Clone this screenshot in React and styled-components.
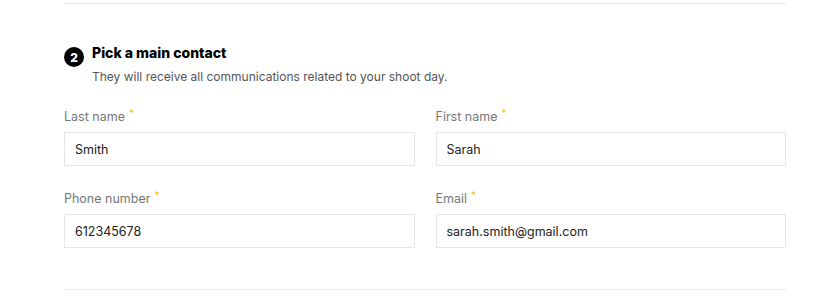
import React from 'react'
import styled, { createGlobalStyle } from 'styled-components'

const GlobalStyle = createGlobalStyle`
    body {
        margin: 0;
        background: #ffffff;
        font-family: Inter, "Open Sans", sans-serif;
    }
`

const Page = styled.div`
    width: 722px;
    margin-left: 64px;
    padding-top: 3px;
`

const Divider = styled.div`
    height: 1px;
    background: #e9e9e9;
    margin-top: ${props => props.top || 0}px;
`

const Header = styled.div`
    display: flex;
    align-items: flex-start;
    gap: 8px;
    margin-top: 39px;
`

const Badge = styled.div`
    width: 20px;
    height: 20px;
    margin-top: 4px;
    border-radius: 50%;
    background: #000000;
    color: #ffffff;
    font-size: 12px;
    font-weight: 800;
    display: flex;
    align-items: center;
    justify-content: center;
`

const Title = styled.h2`
    margin: 0;
    font-size: 14px;
    line-height: 20px;
    font-weight: 800;
    color: #000000;
`

const Subtitle = styled.p`
    margin: 5px 0 0;
    font-size: 12px;
    line-height: 18px;
    color: #555555;
`

const Fields = styled.div`
    display: grid;
    grid-template-columns: 1fr 1fr;
    column-gap: 21px;
    row-gap: 24px;
    margin-top: 22px;
`

const Field = styled.div`
    display: flex;
    flex-direction: column;
    gap: 6px;
`

const Label = styled.label`
    font-size: 12.5px;
    line-height: 18px;
    color: #777777;
`

const Star = styled.sup`
    color: #f5c400;
    font-size: 10px;
    margin-left: 4px;
    vertical-align: top;
    line-height: 10px;
`

const Input = styled.input`
    box-sizing: border-box;
    height: 34px;
    width: 100%;
    padding: 0 10px;
    border: 1px solid #e6e6e6;
    font-family: Inter, "Open Sans", sans-serif;
    font-size: 12.5px;
    color: #222222;
    outline: none;
`

const fields = [
    { id: 'last_name', label: 'Last name', value: 'Smith' },
    { id: 'first_name', label: 'First name', value: 'Sarah' },
    { id: 'phone', label: 'Phone number', value: '612345678' },
    { id: 'email', label: 'Email', value: 'sarah.smith@gmail.com' },
]

const App = () => {
    return (
        <Page>
            <GlobalStyle />
            <Divider />
            <Header>
                <Badge>2</Badge>
                <div>
                    <Title>Pick a main contact</Title>
                    <Subtitle>They will receive all communications related to your shoot day.</Subtitle>
                </div>
            </Header>
            <Fields>
                {fields.map(f => (
                    <Field key={f.id}>
                        <Label htmlFor={f.id}>{f.label}<Star>*</Star></Label>
                        <Input id={f.id} name={f.id} defaultValue={f.value} />
                    </Field>
                ))}
            </Fields>
            <Divider top={41} />
        </Page>
    )
}

export default App
